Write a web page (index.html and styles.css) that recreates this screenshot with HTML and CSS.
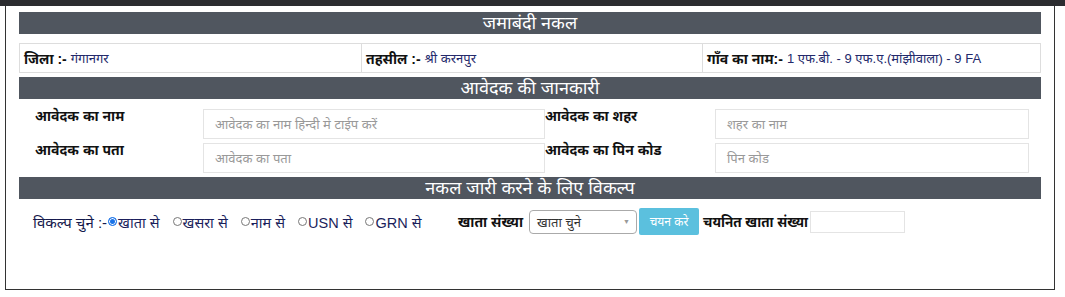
FILE: index.html
```html
<!DOCTYPE html>
<html lang="hi">
<head>
<meta charset="utf-8">
<title>जमाबंदी नकल</title>
<link rel="stylesheet" href="styles.css">
</head>
<body>
<div class="topbar"></div>
<div class="panel">
  <div class="section-head">जमाबंदी नकल</div>
  <div class="info-row">
    <div class="info-cell c1"><b>जिला :-</b> <span class="val">गंगानगर</span></div>
    <div class="info-cell c2"><b>तहसील :-</b> <span class="val">श्री करनपुर</span></div>
    <div class="info-cell c3"><b>गाँव का नाम:-</b> <span class="val">1 एफ.बी. - 9 एफ.ए.(मांझीवाला) - 9 FA</span></div>
  </div>
  <div class="section-head gap-s">आवेदक की जानकारी</div>
  <div class="form-grid">
    <label class="flabel">आवेदक का नाम</label>
    <div class="finput">आवेदक का नाम हिन्दी मे टाईप करें</div>
    <label class="flabel">आवेदक का शहर</label>
    <div class="finput">शहर का नाम</div>
    <label class="flabel">आवेदक का पता</label>
    <div class="finput">आवेदक का पता</div>
    <label class="flabel">आवेदक का पिन कोड</label>
    <div class="finput">पिन कोड</div>
  </div>
  <div class="section-head gap-s">नकल जारी करने के लिए विकल्प</div>
  <div class="options">
    <div class="opt-group">
      <span class="opt-title">विकल्प चुने :-</span>
      <span class="radio"><span class="dot on"></span>खाता से</span>
      <span class="radio"><span class="dot"></span>खसरा से</span>
      <span class="radio"><span class="dot"></span>नाम से</span>
      <span class="radio"><span class="dot"></span>USN से</span>
      <span class="radio"><span class="dot"></span>GRN से</span>
    </div>
    <span class="blabel">खाता संख्या</span>
    <div class="select"><span>खाता चुने</span><span class="arrow">▼</span></div>
    <button class="btn">चयन करे</button>
    <span class="blabel sel">चयनित खाता संख्या</span>
    <div class="small-input"></div>
  </div>
</div>
</body>
</html>
```

FILE: styles.css
```css
html, body {
  margin: 0;
  padding: 0;
  background: #fff;
  font-family: "Liberation Sans", "Noto Sans", Arial, sans-serif;
  color: #111;
}
.topbar {
  height: 6px;
  background: #2b2c30;
}
.panel {
  margin-left: 5px;
  width: 1050px;
  height: 284px;
  border: 1px solid #333;
  border-top: none;
  padding: 6px 13px 0 13px;
  box-sizing: border-box;
}
.section-head {
  background: #50565f;
  color: #fff;
  height: 22px;
  line-height: 22px;
  font-size: 18px;
  text-align: center;
}
.gap-s { margin-top: 4px; }
.info-row {
  display: flex;
  margin-top: 9px;
  height: 30px;
  border: 1px solid #ddd;
  box-sizing: border-box;
}
.info-cell {
  display: flex;
  align-items: center;
  gap: 4px;
  padding: 0 4px;
  font-size: 14px;
  border-right: 1px solid #ddd;
  color: #111;
  box-sizing: border-box;
}
.info-cell b { font-weight: bold; }
.info-cell .val {
  font-size: 13px;
  color: #23296b;
}
.c1 { width: 342px; }
.c2 { width: 341px; }
.c3 { flex: 1; border-right: none; }
.form-grid {
  display: grid;
  grid-template-columns: 168px 342px 170px 314px;
  grid-auto-rows: 30px;
  row-gap: 4px;
  margin-top: 10px;
  padding-left: 16px;
}
.flabel {
  font-size: 14px;
  font-weight: bold;
  color: #111;
  margin-top: -3px;
}
.finput {
  border: 1px solid #e4e4e4;
  box-sizing: border-box;
  padding: 0 11px;
  display: flex;
  align-items: center;
  font-size: 13px;
  color: #999;
}
.options {
  display: flex;
  align-items: center;
  margin-top: 9px;
  height: 27px;
  padding-left: 14px;
}
.opt-group {
  width: 425px;
  display: flex;
  align-items: center;
  color: #1b1f5c;
}
.opt-title {
  color: #151a4d;
  font-size: 15px;
}
.radio {
  display: inline-flex;
  align-items: center;
  margin-right: 11px;
  font-size: 14.5px;
}
.dot {
  width: 7px;
  height: 7px;
  border: 1px solid #777;
  border-radius: 50%;
  margin-right: 1px;
  margin-left: 2px;
  box-sizing: content-box;
}
.opt-title + .radio .dot { margin-left: 1px; }
.dot.on {
  background: #1a73e8;
  border-color: #1a73e8;
  box-shadow: inset 0 0 0 1px #fff;
}
.blabel {
  font-size: 14px;
  font-weight: bold;
  color: #111;
  margin-right: 6px;
}
.select {
  width: 108px;
  height: 24px;
  border: 1px solid #aaa;
  border-radius: 4px;
  box-sizing: border-box;
  display: flex;
  align-items: center;
  justify-content: space-between;
  padding: 0 6px 0 7px;
  font-size: 13px;
  color: #333;
}
.arrow {
  font-size: 7px;
  color: #999;
}
.btn {
  margin-left: 2px;
  width: 60px;
  height: 27px;
  border: none;
  border-radius: 2px;
  background: #5bc0de;
  color: #fff;
  font-family: inherit;
  font-size: 12px;
  padding: 0;
}
.sel { margin-left: 4px; margin-right: 2px; font-size: 13.5px; }
.small-input {
  width: 95px;
  height: 22px;
  border: 1px solid #e4e4e4;
  box-sizing: border-box;
}
```
